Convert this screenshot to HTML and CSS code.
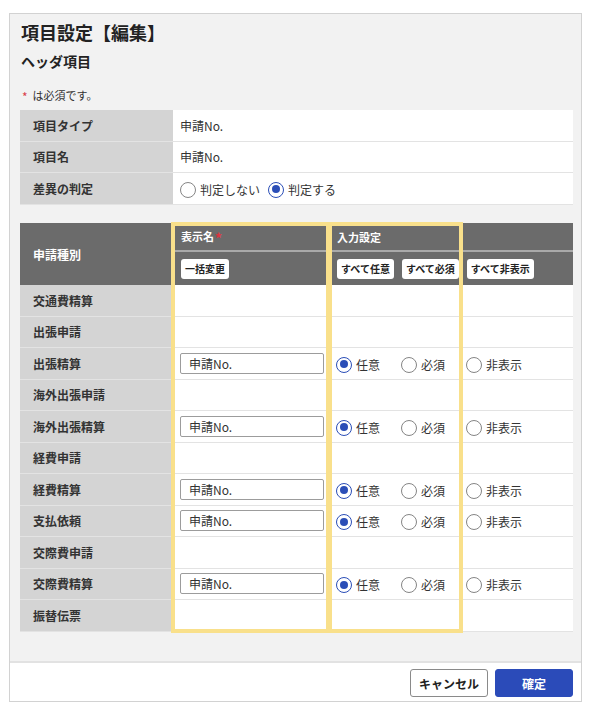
FILE: index.html
```html
<!DOCTYPE html>
<html lang="ja">
<head>
<meta charset="utf-8">
<title>項目設定【編集】</title>
<link rel="stylesheet" href="styles.css">
</head>
<body>
<div class="panel">
  <div class="content">
    <h1 class="title">項目設定【編集】</h1>
    <h2 class="subtitle">ヘッダ項目</h2>
    <p class="note"><span class="req">*</span><span class="note-text">は必須です。</span></p>
    <table class="info">
      <tr><th>項目タイプ</th><td>申請No.</td></tr>
      <tr><th>項目名</th><td>申請No.</td></tr>
      <tr><th>差異の判定</th><td><span class="opt gap"><span class="radio"></span>判定しない</span><span class="opt"><span class="radio on"></span>判定する</span></td></tr>
    </table>
    <div class="grid-wrap">
      <table class="grid">
        <colgroup><col class="c1"><col class="c2"><col class="c3"></colgroup>
        <thead>
          <tr class="hr1"><th rowspan="2" class="kind">申請種別</th><th>表示名<span class="hreq">*</span></th><th>入力設定</th></tr>
          <tr class="hr2"><th><span class="hbtn">一括変更</span></th><th><span class="hbtn">すべて任意</span><span class="hbtn">すべて必須</span><span class="hbtn">すべて非表示</span></th></tr>
        </thead>
        <tbody>
          <tr><th>交通費精算</th><td></td><td></td></tr>
          <tr><th>出張申請</th><td></td><td></td></tr>
          <tr><th>出張精算</th><td><span class="field">申請No.</span></td><td><span class="opt w"><span class="radio on"></span>任意</span><span class="opt w"><span class="radio"></span>必須</span><span class="opt w"><span class="radio"></span>非表示</span></td></tr>
          <tr><th>海外出張申請</th><td></td><td></td></tr>
          <tr><th>海外出張精算</th><td><span class="field">申請No.</span></td><td><span class="opt w"><span class="radio on"></span>任意</span><span class="opt w"><span class="radio"></span>必須</span><span class="opt w"><span class="radio"></span>非表示</span></td></tr>
          <tr><th>経費申請</th><td></td><td></td></tr>
          <tr><th>経費精算</th><td><span class="field">申請No.</span></td><td><span class="opt w"><span class="radio on"></span>任意</span><span class="opt w"><span class="radio"></span>必須</span><span class="opt w"><span class="radio"></span>非表示</span></td></tr>
          <tr><th>支払依頼</th><td><span class="field">申請No.</span></td><td><span class="opt w"><span class="radio on"></span>任意</span><span class="opt w"><span class="radio"></span>必須</span><span class="opt w"><span class="radio"></span>非表示</span></td></tr>
          <tr><th>交際費申請</th><td></td><td></td></tr>
          <tr><th>交際費精算</th><td><span class="field">申請No.</span></td><td><span class="opt w"><span class="radio on"></span>任意</span><span class="opt w"><span class="radio"></span>必須</span><span class="opt w"><span class="radio"></span>非表示</span></td></tr>
          <tr><th>振替伝票</th><td></td><td></td></tr>
        </tbody>
      </table>
      <div class="hl hl-name"></div>
      <div class="hl hl-input"></div>
    </div>
  </div>
  <div class="footer">
    <span class="btn">キャンセル</span>
    <span class="btn primary">確定</span>
  </div>
</div>
</body>
</html>
```
FILE: styles.css
```css
* { box-sizing: border-box; }
html, body { margin: 0; padding: 0; background: #ffffff; }
body {
  font-family: "Noto Sans CJK JP", "Noto Sans", "Liberation Sans", sans-serif;
  color: #333333;
  font-size: 12px;
}
.panel {
  margin: 13px 0 0 9px;
  width: 573px;
  height: 689px;
  border: 1px solid #d2d2d2;
  background: #f2f2f2;
  display: flex;
  flex-direction: column;
}
.content {
  padding: 6px 8px 0 10px;
  flex: 1;
}
.title {
  margin: 0 0 0 1px;
  font-size: 18px;
  line-height: 24px;
  font-weight: bold;
  color: #222222;
}
.subtitle {
  margin: 7px 0 0 1px;
  font-size: 14px;
  line-height: 20px;
  font-weight: bold;
  color: #222222;
}
.note {
  margin: 16px 0 0 2px;
  font-size: 11px;
  line-height: 16px;
  height: 16px;
}
.req {
  color: #d9404a;
  font-weight: normal;
  font-size: 12px;
  line-height: 1;
  vertical-align: -2px;
}
.note-text { margin-left: 5px; }

.info {
  margin-top: 7px;
  width: 553px;
  border-collapse: separate;
  border-spacing: 0;
}
.info th, .info td {
  height: 31.5px;
  padding: 0;
  border-bottom: 1px solid #e3e3e3;
  font-size: 12px;
  text-align: left;
  vertical-align: middle;
}
.info th {
  width: 153px;
  background: #d4d4d4;
  padding-left: 13px;
  font-weight: bold;
}
.info td {
  background: #ffffff;
  padding-left: 7px;
}

.opt {
  display: inline-flex;
  align-items: center;
  vertical-align: middle;
  font-size: 12px;
  line-height: 16px;
}
.opt.gap { margin-right: 8px; }
.opt.w { width: 65px; }
.radio {
  width: 16px;
  height: 16px;
  border-radius: 50%;
  border: 1px solid #858585;
  background: #ffffff;
  margin-right: 4px;
  flex: none;
  position: relative;
}
.radio.on {
  border: 1.5px solid #2b4eb7;
}
.radio.on::after {
  content: "";
  position: absolute;
  left: 2.5px;
  top: 2.5px;
  width: 8px;
  height: 8px;
  border-radius: 50%;
  background: #2b4eb7;
}

.grid-wrap {
  position: relative;
  margin-top: 18.5px;
  width: 553px;
}
.grid {
  width: 553px;
  border-collapse: separate;
  border-spacing: 0;
  table-layout: fixed;
}
.c1 { width: 153px; }
.c2 { width: 156px; }
.c3 { width: 244px; }
.grid thead th {
  background: #6b6b6b;
  color: #ffffff;
  font-weight: bold;
  font-size: 11px;
  text-align: left;
  padding: 0 0 0 8px;
}
.grid thead th.kind {
  padding-left: 13px;
  font-size: 12px;
  vertical-align: middle;
}
.hreq {
  color: #e0343f;
  font-size: 14px;
  font-weight: bold;
  margin-left: 1px;
  vertical-align: -3px;
  line-height: 1;
}
.hr1 th { height: 29px; border-bottom: 2px solid #a9a9a9; vertical-align: middle; }
.hr1 th.kind { border-bottom: 0; }
.hr2 th { height: 33px; vertical-align: middle; font-size: 0; }
.hbtn {
  display: inline-block;
  height: 20px;
  line-height: 20px;
  padding: 0 4px;
  background: #ffffff;
  color: #222222;
  border-radius: 3px;
  font-size: 10px;
  font-weight: bold;
  margin-right: 8px;
  vertical-align: middle;
}
.grid tbody th, .grid tbody td {
  height: 31.5px;
  padding: 0;
  border-bottom: 1px solid #e3e3e3;
  vertical-align: middle;
  text-align: left;
}
.grid tbody th {
  background: #d4d4d4;
  font-weight: bold;
  padding-left: 13px;
}
.grid tbody td { background: #ffffff; }
.grid tbody td:nth-child(2) { padding-left: 7px; }
.grid tbody td:nth-child(3) { padding-left: 7px; }
.field {
  display: flex;
  align-items: center;
  width: 144px;
  height: 21px;
  border: 1px solid #9c9c9c;
  border-radius: 2px;
  padding-left: 8px;
  background: #ffffff;
  font-size: 12px;
}
.hl {
  position: absolute;
  top: -1px;
  height: 411px;
  border: 4px solid #f9e08b;
  pointer-events: none;
}
.hl-name { left: 151px; width: 158px; border-right-width: 3px; }
.hl-input { left: 309px; width: 134px; border-left-width: 3px; }

.footer {
  border-top: 2px solid #e2e2e2;
  background: #ffffff;
  padding: 6px 8px 4px 0;
  display: flex;
  justify-content: flex-end;
  gap: 7px;
}
.btn {
  width: 78px;
  height: 28px;
  display: flex;
  align-items: center;
  justify-content: center;
  border: 1px solid #8a8a8a;
  border-radius: 3px;
  background: #ffffff;
  font-weight: bold;
  font-size: 12px;
  color: #222222;
}
.btn.primary {
  background: #2b4bb9;
  border-color: #2b4bb9;
  color: #ffffff;
}
```
